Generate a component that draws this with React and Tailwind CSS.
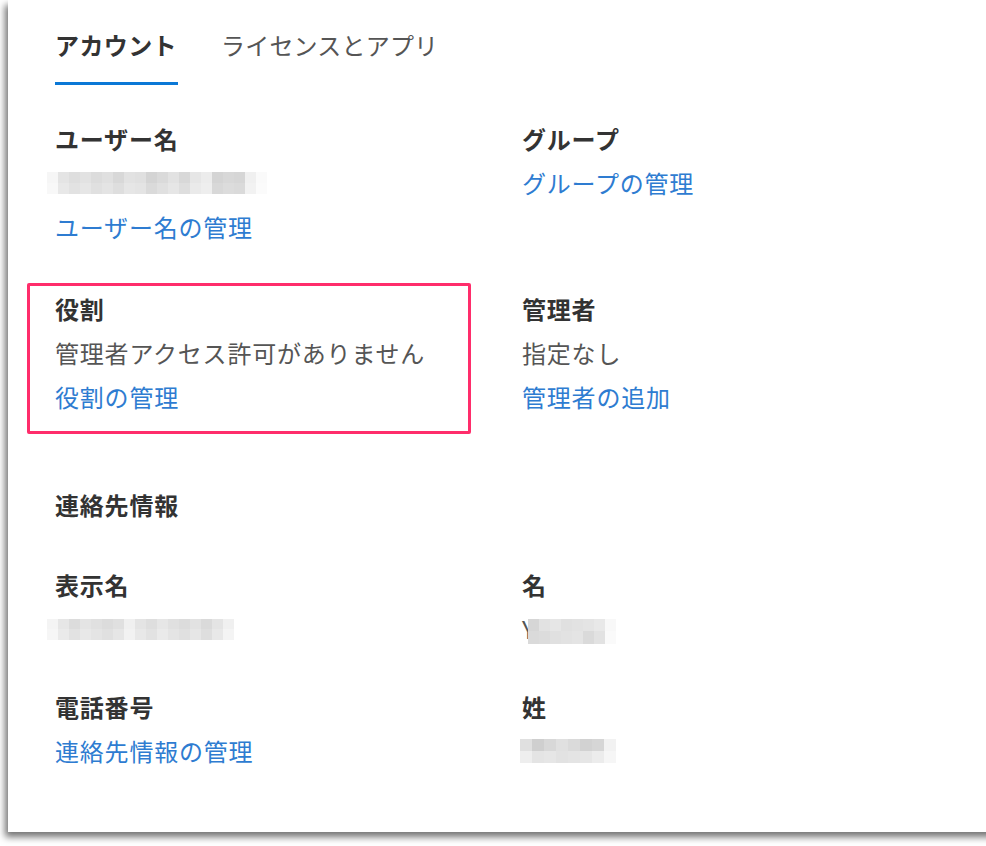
import React from "react";

const FONT = { fontFamily: '"Noto Sans CJK JP", "Noto Sans", sans-serif' };

function Mosaic({ cells, cellW, h, className = "" }) {
  return (
    <div className={"flex items-stretch blur-[0.6px] " + className} style={{ height: h }}>
      {cells.map((c, i) => (
        <div key={i} className="flex flex-col" style={{ width: cellW }}>
          <div className="flex-1" style={{ background: c[0] }} />
          <div className="flex-1" style={{ background: c[1] }} />
        </div>
      ))}
    </div>
  );
}

function Label({ children }) {
  return <div className="h-[44px] leading-[44px] text-[24px] tracking-[0.8px] font-bold text-[#333333]">{children}</div>;
}
function Value({ children }) {
  return <div className="h-[44px] leading-[44px] text-[24px] tracking-[0.8px] text-[#555555]">{children}</div>;
}
function Link({ children }) {
  return <div className="h-[44px] leading-[44px] text-[24px] tracking-[0.8px] text-[#2e7cd1]">{children}</div>;
}

export default function App() {
  return (
    <div className="w-[986px] h-[846px] bg-white overflow-hidden" style={FONT}>
      <div className="ml-[8px] w-[1000px] h-[832px] bg-white shadow-[-3px_5px_7px_rgba(0,0,0,0.55)] pl-[47px]">
        {/* Tabs */}
        <div className="flex gap-[43px] pt-[21px]">
          <div className="flex flex-col w-[123px]">
            <div className="h-[48px] leading-[48px] text-[24px] tracking-[0.4px] font-bold text-[#333333]">アカウント</div>
            <div className="mt-[13px] h-[3px] bg-[#0b78d6]" />
          </div>
          <div className="h-[48px] leading-[48px] text-[24px] tracking-[0.2px] text-[#555555]">ライセンスとアプリ</div>
        </div>

        {/* Row 1 */}
        <div className="grid grid-cols-[467px_1fr] mt-[32px]">
          <div>
            <Label>ユーザー名</Label>
            <div className="h-[44px] flex items-center">
              <Mosaic
                className="-ml-[8px]"
                cellW={11}
                h={22}
                cells={[
                  ["#f6f6f6", "#f8f8f8"], ["#e4e4e4", "#e8e8e8"], ["#dedede", "#e2e2e2"], ["#e2e2e2", "#e6e6e6"],
                  ["#dcdcdc", "#e0e0e0"], ["#e0e0e0", "#e4e4e4"], ["#d8d8d8", "#dedede"], ["#e2e2e2", "#e6e6e6"],
                  ["#e0e0e0", "#e4e4e4"], ["#d4d4d4", "#dadada"], ["#dadada", "#e0e0e0"], ["#e2e2e2", "#e6e6e6"],
                  ["#d8d8d8", "#dedede"], ["#e6e6e6", "#eaeaea"], ["#ececec", "#eeeeee"], ["#d4d4d4", "#d8d8d8"],
                  ["#d8d8d8", "#dcdcdc"], ["#d6d6d6", "#dadada"], ["#f0f0f0", "#f2f2f2"], ["#fafafa", "#fbfbfb"],
                ]}
              />
            </div>
            <Link>ユーザー名の管理</Link>
          </div>
          <div>
            <Label>グループ</Label>
            <Link>グループの管理</Link>
          </div>
        </div>

        {/* Row 2 */}
        <div className="grid grid-cols-[467px_1fr] mt-[38px]">
          <div className="relative">
            <Label>役割</Label>
            <Value>管理者アクセス許可がありません</Value>
            <Link>役割の管理</Link>
            <div className="absolute left-[-28px] top-[-4px] w-[444px] h-[151px] border-[3px] border-[#ff2d6b] rounded-[2px] pointer-events-none" />
          </div>
          <div>
            <Label>管理者</Label>
            <Value>指定なし</Value>
            <Link>管理者の追加</Link>
          </div>
        </div>

        {/* Row 3 heading */}
        <div className="mt-[64px]">
          <Label>連絡先情報</Label>
        </div>

        {/* Row 4 */}
        <div className="grid grid-cols-[467px_1fr] mt-[36px]">
          <div>
            <Label>表示名</Label>
            <div className="h-[44px] flex items-center">
              <Mosaic
                className="-ml-[8px]"
                cellW={11}
                h={21}
                cells={[
                  ["#f4f4f4", "#f6f6f6"], ["#e6e6e6", "#eaeaea"], ["#dcdcdc", "#e2e2e2"], ["#e4e4e4", "#e8e8e8"],
                  ["#e0e0e0", "#e4e4e4"], ["#dcdcdc", "#e0e0e0"], ["#e0e0e0", "#e6e6e6"], ["#f0f0f0", "#f2f2f2"],
                  ["#e4e4e4", "#e8e8e8"], ["#dedede", "#e2e2e2"], ["#e6e6e6", "#eaeaea"], ["#e0e0e0", "#e4e4e4"],
                  ["#dcdcdc", "#e0e0e0"], ["#e2e2e2", "#e6e6e6"], ["#dadada", "#dedede"], ["#e4e4e4", "#e8e8e8"],
                  ["#f0f0f0", "#f4f4f4"],
                ]}
              />
            </div>
          </div>
          <div>
            <Label>名</Label>
            <div className="h-[44px] flex items-center text-[24px] text-[#555555]">
              <span className="leading-[44px]">Y</span>
              <Mosaic
                cellW={11}
                h={25}
                className="mt-[4px] -ml-[7px]"
                cells={[
                  ["#d6d6d6", "#dadada"], ["#e2e2e2", "#dcdcdc"], ["#e6e6e6", "#e0e0e0"], ["#e0e0e0", "#e2e2e2"],
                  ["#e2e2e2", "#e4e4e4"], ["#e4e4e4", "#dadada"], ["#e8e8e8", "#e2e2e2"], ["#f8f8f8", "#fafafa"],
                ]}
              />
            </div>
          </div>
        </div>

        {/* Row 5 */}
        <div className="grid grid-cols-[467px_1fr] mt-[34px]">
          <div>
            <Label>電話番号</Label>
            <Link>連絡先情報の管理</Link>
          </div>
          <div>
            <Label>姓</Label>
            <div className="h-[44px] flex items-center">
              <Mosaic
                className="-ml-[2px]"
                cellW={12}
                h={24}
                cells={[
                  ["#e0e0e0", "#eeeeee"], ["#cfcfcf", "#e4e4e4"], ["#d8d8d8", "#e6e6e6"], ["#e0e0e0", "#e2e2e2"],
                  ["#dadada", "#e4e4e4"], ["#d2d2d2", "#e6e6e6"], ["#d6d6d6", "#ececec"], ["#f2f2f2", "#f6f6f6"],
                ]}
              />
            </div>
          </div>
        </div>
      </div>
    </div>
  );
}
